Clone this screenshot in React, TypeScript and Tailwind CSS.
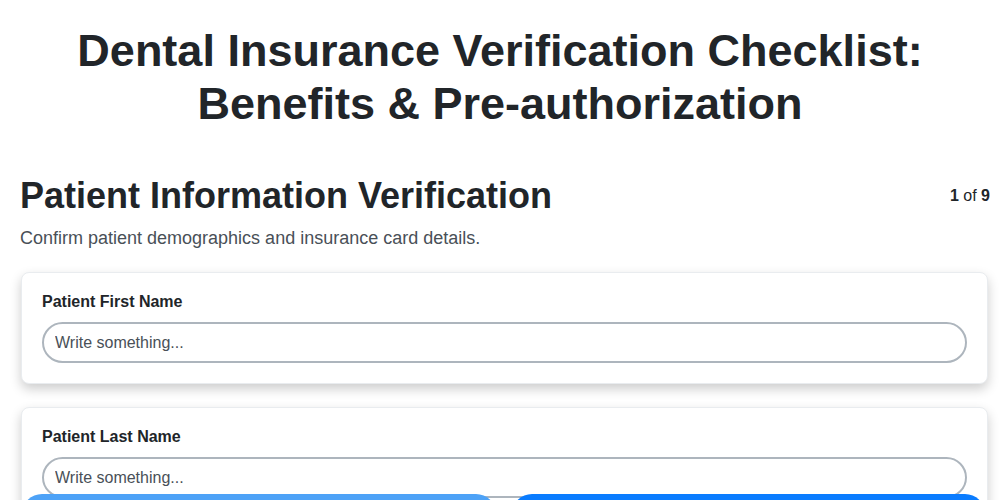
import React from "react";

const fields = ["Patient First Name", "Patient Last Name", "Date of Birth"];

const App: React.FC = () => {
  return (
    <div
      className="min-h-screen bg-white text-[#212529]"
      style={{ fontFamily: '"Liberation Sans", Arial, sans-serif' }}
    >
      <h1 className="px-5 pt-[24px] text-center text-[45px] font-bold leading-[53px]">
        Dental Insurance Verification Checklist:
        <br />
        Benefits &amp; Pre-authorization
      </h1>

      <div className="pl-5 pr-[10px]">
        <div className="mt-[44px] flex items-start justify-between">
          <h2 className="text-[36px] font-bold leading-[44px]">
            Patient Information Verification
          </h2>
          <div className="pt-[10px] text-[16px]">
            <span className="font-bold">1</span> of{" "}
            <span className="font-bold">9</span>
          </div>
        </div>
        <p className="mt-[7px] text-[18px] text-[#495057]">
          Confirm patient demographics and insurance card details.
        </p>

        <div className="mt-[20px] flex flex-col gap-[23px] pl-px pr-[2px]">
          {fields.map((f) => (
            <div
              key={f}
              className="rounded-lg border border-[#e9ecef] bg-white px-5 pt-5 pb-5 shadow-[0_5px_12px_rgba(0,0,0,0.2)]"
            >
              <label className="block text-[16px] font-bold leading-[18px]">
                {f}
              </label>
              <input
                type="text"
                placeholder="Write something..."
                className="mt-[11px] h-[41px] w-full rounded-full border-2 border-[#adb5bd] bg-white px-[11px] text-[16px] placeholder:text-[#495057] outline-none"
              />
            </div>
          ))}
        </div>
      </div>

      <div className="fixed left-0 right-0 top-[494px] grid grid-cols-2 gap-4 pl-[22px] pr-[15px]">
        <button className="h-12 rounded-[20px] bg-[#4da2f7] text-white font-bold">
          Previous
        </button>
        <button className="h-12 rounded-[20px] bg-[#0a7cff] text-white font-bold">
          Next
        </button>
      </div>
    </div>
  );
};

export default App;
